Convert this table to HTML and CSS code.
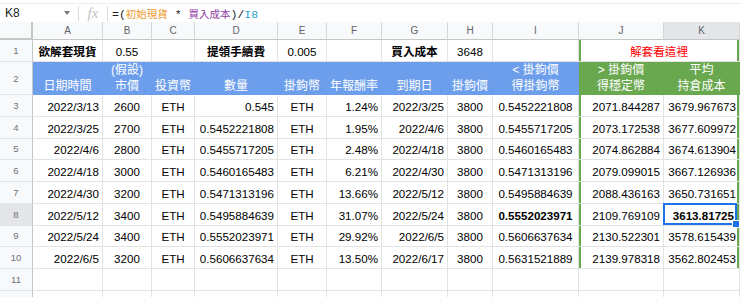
FILE: index.html
```html
<!DOCTYPE html>
<html lang="zh-Hant">
<head>
<meta charset="utf-8">
<title>Sheet</title>
<link rel="stylesheet" href="styles.css">
</head>
<body>
<div class="formula-bar">
  <div class="name-box"><span class="name">K8</span><svg class="caret" width="6" height="4" viewBox="0 0 6 4"><path d="M0 0h6L3 4z" fill="#777"/></svg></div>
  <div class="divider"></div>
  <div class="fx">fx</div>
  <div class="divider"></div>
  <div class="formula">=(<span class="ref-o">初始現貨</span> * <span class="ref-p">買入成本</span>)/<span class="ref-b">I8</span></div>
</div>

<div class="sheet">
  <!-- column headers -->
  <div class="corner"></div>
  <div class="ch">A</div><div class="ch">B</div><div class="ch">C</div><div class="ch">D</div><div class="ch">E</div><div class="ch">F</div><div class="ch">G</div><div class="ch">H</div><div class="ch">I</div><div class="ch">J</div><div class="ch sel">K</div>

  <!-- row 1 -->
  <div class="rh">1</div>
  <div class="cell c b">欲解套現貨</div>
  <div class="cell c">0.55</div>
  <div class="cell"></div>
  <div class="cell c b">提領手續費</div>
  <div class="cell c">0.005</div>
  <div class="cell"></div>
  <div class="cell c b">買入成本</div>
  <div class="cell c">3648</div>
  <div class="cell"></div>
  <div class="cell c red merged gl gr">解套看這裡</div>

  <!-- row 2 -->
  <div class="rh">2</div>
  <div class="cell hd blue">日期時間</div>
  <div class="cell hd blue">(假設)<br>市價</div>
  <div class="cell hd blue">投資幣</div>
  <div class="cell hd blue">數量</div>
  <div class="cell hd blue">掛鉤幣</div>
  <div class="cell hd blue">年報酬率</div>
  <div class="cell hd blue">到期日</div>
  <div class="cell hd blue">掛鉤價</div>
  <div class="cell hd blue">&lt; 掛鉤價<br>得掛鉤幣</div>
  <div class="cell hd green">&gt; 掛鉤價<br>得穩定幣</div>
  <div class="cell hd green">平均<br>持倉成本</div>

  <!-- row 3 -->
  <div class="rh">3</div>
  <div class="cell r">2022/3/13</div><div class="cell c">2600</div><div class="cell c">ETH</div><div class="cell r">0.545</div><div class="cell c">ETH</div><div class="cell r">1.24%</div><div class="cell r">2022/3/25</div><div class="cell c">3800</div><div class="cell c">0.5452221808</div><div class="cell r gl">2071.844287</div><div class="cell r gr">3679.967673</div>

  <!-- row 4 -->
  <div class="rh">4</div>
  <div class="cell r">2022/3/25</div><div class="cell c">2700</div><div class="cell c">ETH</div><div class="cell r">0.5452221808</div><div class="cell c">ETH</div><div class="cell r">1.95%</div><div class="cell r">2022/4/6</div><div class="cell c">3800</div><div class="cell c">0.5455717205</div><div class="cell r gl">2073.172538</div><div class="cell r gr">3677.609972</div>

  <!-- row 5 -->
  <div class="rh">5</div>
  <div class="cell r">2022/4/6</div><div class="cell c">2800</div><div class="cell c">ETH</div><div class="cell r">0.5455717205</div><div class="cell c">ETH</div><div class="cell r">2.48%</div><div class="cell r">2022/4/18</div><div class="cell c">3800</div><div class="cell c">0.5460165483</div><div class="cell r gl">2074.862884</div><div class="cell r gr">3674.613904</div>

  <!-- row 6 -->
  <div class="rh">6</div>
  <div class="cell r">2022/4/18</div><div class="cell c">3000</div><div class="cell c">ETH</div><div class="cell r">0.5460165483</div><div class="cell c">ETH</div><div class="cell r">6.21%</div><div class="cell r">2022/4/30</div><div class="cell c">3800</div><div class="cell c">0.5471313196</div><div class="cell r gl">2079.099015</div><div class="cell r gr">3667.126936</div>

  <!-- row 7 -->
  <div class="rh">7</div>
  <div class="cell r">2022/4/30</div><div class="cell c">3200</div><div class="cell c">ETH</div><div class="cell r">0.5471313196</div><div class="cell c">ETH</div><div class="cell r">13.66%</div><div class="cell r">2022/5/12</div><div class="cell c">3800</div><div class="cell c">0.5495884639</div><div class="cell r gl">2088.436163</div><div class="cell r gr">3650.731651</div>

  <!-- row 8 -->
  <div class="rh sel">8</div>
  <div class="cell r">2022/5/12</div><div class="cell c">3400</div><div class="cell c">ETH</div><div class="cell r">0.5495884639</div><div class="cell c">ETH</div><div class="cell r">31.07%</div><div class="cell r">2022/5/24</div><div class="cell c">3800</div><div class="cell c b">0.5552023971</div><div class="cell r gl">2109.769109</div><div class="cell r gr b active">3613.81725</div>

  <!-- row 9 -->
  <div class="rh">9</div>
  <div class="cell r">2022/5/24</div><div class="cell c">3400</div><div class="cell c">ETH</div><div class="cell r">0.5552023971</div><div class="cell c">ETH</div><div class="cell r">29.92%</div><div class="cell r">2022/6/5</div><div class="cell c">3800</div><div class="cell c">0.5606637634</div><div class="cell r gl">2130.522301</div><div class="cell r gr">3578.615439</div>

  <!-- row 10 -->
  <div class="rh">10</div>
  <div class="cell r">2022/6/5</div><div class="cell c">3200</div><div class="cell c">ETH</div><div class="cell r">0.5606637634</div><div class="cell c">ETH</div><div class="cell r">13.50%</div><div class="cell r">2022/6/17</div><div class="cell c">3800</div><div class="cell c">0.5631521889</div><div class="cell r gl">2139.978318</div><div class="cell r gr">3562.802453</div>

  <!-- row 11 -->
  <div class="rh">11</div>
  <div class="cell"></div><div class="cell"></div><div class="cell"></div><div class="cell"></div><div class="cell"></div><div class="cell"></div><div class="cell"></div><div class="cell"></div><div class="cell"></div><div class="cell"></div><div class="cell"></div>

  <!-- row 12 (only its top edge is in view) -->
  <div class="rh"></div>
  <div class="cell"></div><div class="cell"></div><div class="cell"></div><div class="cell"></div><div class="cell"></div><div class="cell"></div><div class="cell"></div><div class="cell"></div><div class="cell"></div><div class="cell"></div><div class="cell"></div>
</div>
</body>
</html>
```

FILE: styles.css
```css
* {
  box-sizing: border-box;
}

body {
  margin: 0;
  width: 740px;
  height: 297px;
  overflow: hidden;
  background: #ffffff;
  font-family: "Liberation Sans", Arial, "Noto Sans CJK TC", sans-serif;
  color: #000000;
}

/* ---------- formula bar ---------- */
.formula-bar {
  display: flex;
  align-items: center;
  height: 19px;
  margin-top: 3px;
  border-top: 1px solid #ececec;
}

.name-box {
  display: flex;
  align-items: center;
  justify-content: space-between;
  width: 78px;
  padding: 0 8px 0 5px;
  font-size: 12px;
  color: #202124;
}

.caret {
  display: block;
}

.divider {
  width: 1px;
  height: 15px;
  background: #dadce0;
}

.fx {
  width: 28px;
  text-align: center;
  font-family: "Liberation Serif", serif;
  font-style: italic;
  font-size: 15px;
  color: #c4c4c4;
  line-height: 16px;
}

.formula {
  padding-left: 4px;
  font-family: "Liberation Mono", "Noto Sans CJK TC", monospace;
  font-size: 11.5px;
  color: #202124;
  white-space: nowrap;
}

.ref-o,
.ref-p {
  font-family: "Noto Sans CJK TC", sans-serif;
  font-size: 10.5px;
}

.ref-o {
  color: #f09a2b;
}

.ref-p {
  color: #8e3a9f;
}

.ref-b {
  color: #2aa3c8;
}

/* ---------- sheet grid ---------- */
.sheet {
  display: grid;
  grid-template-columns: 33px 70px 49px 43px 83px 49px 55px 66px 45px 86px 85px 76px;
  grid-template-rows: 18px 22px 33px repeat(8, 21.75px) 22px 22px;
}

.corner {
  background: #f8f9fa;
  border-right: 2px solid #c4c7c5;
  border-bottom: 2px solid #c4c7c5;
}

.ch {
  display: flex;
  align-items: center;
  justify-content: center;
  background: #f8f9fa;
  border-right: 1px solid #d6d8da;
  border-bottom: 1px solid #c4c7c5;
  font-size: 10px;
  color: #5f6368;
}

.rh {
  display: flex;
  align-items: center;
  justify-content: center;
  background: #f8f9fa;
  border-right: 1px solid #c4c7c5;
  border-bottom: 1px solid #e0e2e4;
  font-size: 9.5px;
  color: #6f7378;
}

.sel {
  background: #e3e5e8;
}

.cell {
  display: flex;
  align-items: flex-end;
  padding: 0 3px 2px;
  border-right: 1px solid #e2e3e3;
  border-bottom: 1px solid #e2e3e3;
  font-size: 11.6px;
  line-height: 14px;
  white-space: nowrap;
  overflow: hidden;
}

.c {
  justify-content: center;
}

.r {
  justify-content: flex-end;
}

.b {
  font-weight: bold;
}

.red {
  color: #ff0000;
}

.merged {
  grid-column: span 2;
}

.hd {
  justify-content: center;
  text-align: center;
  color: #ffffff;
  line-height: 16px;
  padding-bottom: 0;
  font-size: 12px;
}

.blue {
  background: #6d9eeb;
  border-color: #6d9eeb;
}

.green {
  background: #6aa84f;
  border-color: #6aa84f;
}

.gl {
  box-shadow: inset 2px 0 0 #6aa84f;
}

.gr {
  box-shadow: inset -2px 0 0 #6aa84f;
}

.gl.gr {
  box-shadow: inset 2px 0 0 #6aa84f, inset -2px 0 0 #6aa84f;
}

/* active cell selection overlay */
.active {
  position: relative;
  overflow: visible;
  padding-right: 5px;
}

.active::after {
  content: "";
  position: absolute;
  top: -1px;
  left: -1px;
  right: 2px;
  bottom: 0;
  border: 2px solid #1a73e8;
}

.active::before {
  content: "";
  position: absolute;
  right: -1px;
  bottom: -3px;
  width: 6px;
  height: 6px;
  background: #1a73e8;
  border: 1px solid #ffffff;
  z-index: 1;
}
```
